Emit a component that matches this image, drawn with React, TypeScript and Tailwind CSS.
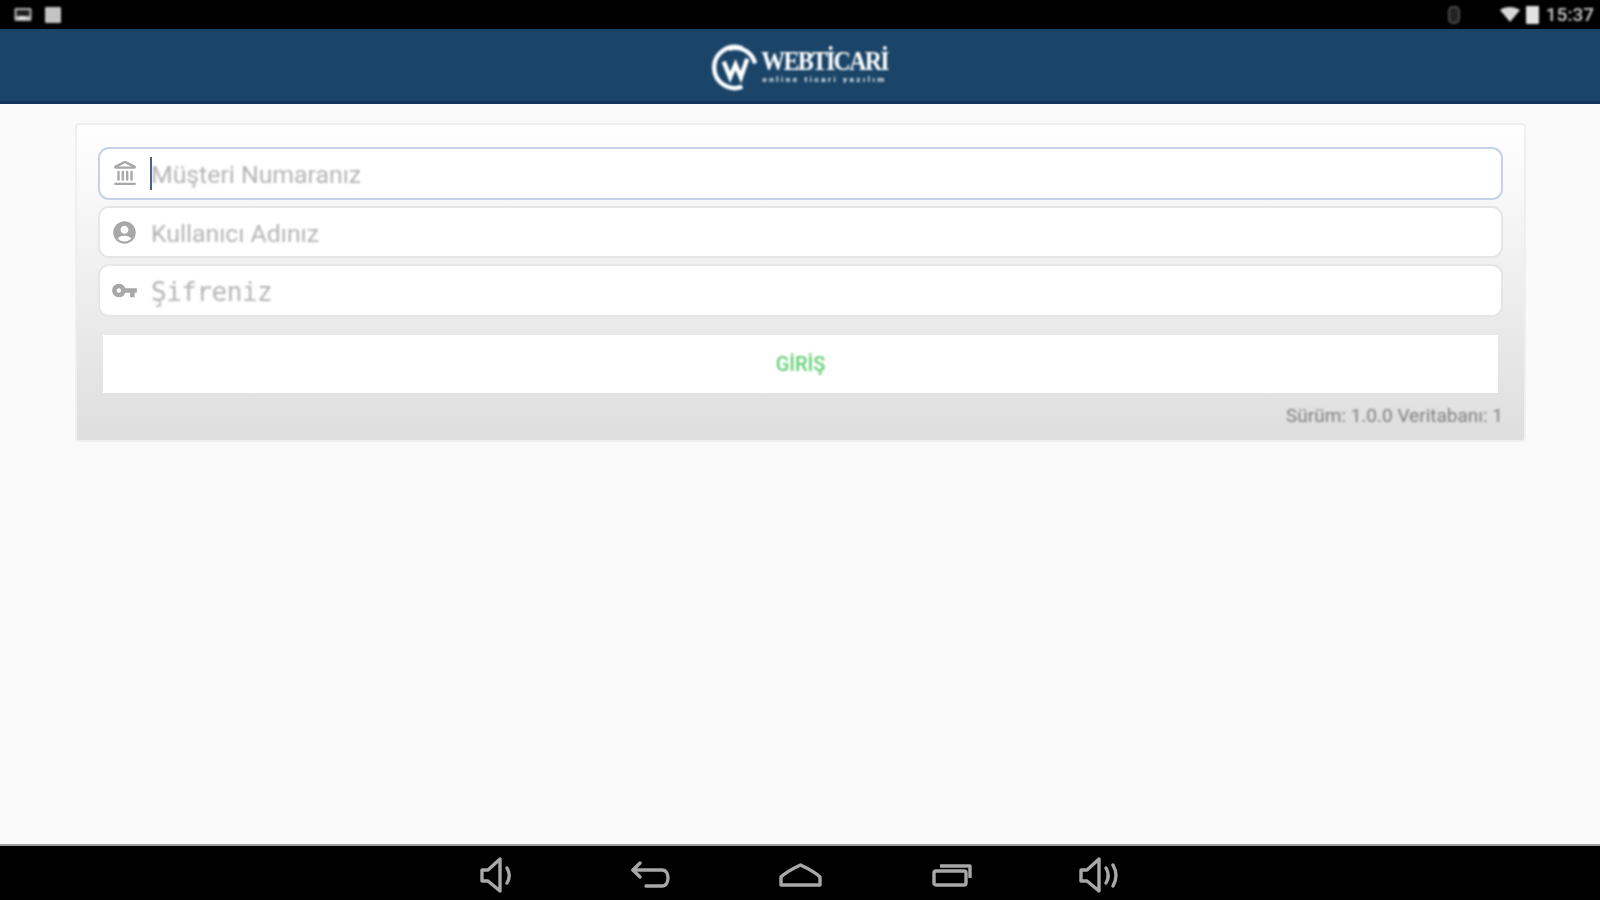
import { MdAccountCircle, MdVpnKey } from 'react-icons/md';
import { Landmark } from 'lucide-react';

const sans = 'font-["Roboto",sans-serif]';

function Field({ icon, label, mono, focused }: { icon: React.ReactNode; label: string; mono?: boolean; focused?: boolean }) {
    return (
        <div
            className={`flex flex-1 items-center rounded-[11px] border-2 bg-white pl-[11px] ${
                focused ? 'border-[#c5d3ea]' : 'border-[#e6e6e6]'
            }`}
        >
            <div className="flex w-[27px] items-center justify-center text-[#a8a8a8] blur-[0.5px]">{icon}</div>
            <div className="relative ml-[12px] flex h-full items-center">
                {focused && <div className="absolute left-0 top-[8px] h-[33px] w-[2px] bg-[#46638f]" />}
                <span
                    className={`mt-[3px] text-[#b4b4b4] blur-[0.9px] ${
                        mono ? 'pl-[1px] font-["DejaVu_Sans_Mono",monospace] text-[26px] tracking-[-0.5px]' : `${sans} pl-[1px] text-[24.8px]`
                    }`}
                >
                    {label}
                </span>
            </div>
        </div>
    );
}

function VolumeIcon({ loud }: { loud?: boolean }) {
    return (
        <svg width={loud ? 41 : 34} height="36" viewBox={loud ? '0 0 41 36' : '0 0 34 36'} fill="none" stroke="#a8a8a8" strokeWidth="3.4" strokeLinejoin="round" strokeLinecap="round">
            <path d="M2 13h6L20 2v32L8 24H2z" />
            <path d="M27 11c3 5 3 10 0 15" />
            {loud && <path d="M34 8c4 7 4 14 0 21" />}
        </svg>
    );
}

export default function App() {
    return (
        <div className="flex h-[900px] w-[1600px] flex-col overflow-hidden bg-[#fafafa]">
            {/* Status bar */}
            <div className="flex h-[29px] shrink-0 items-center justify-between bg-black pl-[14px] pr-[6px]">
                <div className="flex items-center gap-[13px] blur-[0.8px]">
                    <svg width="18" height="15" viewBox="0 0 18 15">
                        <rect x="0.5" y="1" width="17" height="13" rx="1.5" fill="#b5b5b5" />
                        <rect x="2.5" y="3" width="13" height="6" fill="#222" />
                        <path d="M3 12l4-3 4 1 4 2z" fill="#eee" />
                    </svg>
                    <div className="h-[16px] w-[16px] rounded-[1px] bg-[#c4c4c4]" />
                </div>
                <div className="flex items-center blur-[0.8px]">
                    <div className="mr-[40px] h-[18px] w-[12px] rounded-[5px] border-2 border-[#4a4a4a] bg-[#222]" />
                    <svg width="20" height="15" viewBox="0 0 20 15" className="mr-[6px]">
                        <path d="M0 3c5-4 14-4 20 0l-10 12z" fill="#d8d8d8" />
                    </svg>
                    <div className="mr-[7px] h-[18px] w-[13px] rounded-[1px] bg-[#e2e2e2]" />
                    <span className={`${sans} text-[19px] font-medium leading-none text-[#c9c9c9]`}>15:37</span>
                </div>
            </div>

            {/* Header */}
            <div className="flex h-[75px] shrink-0 items-center justify-center border-b-[3px] border-[#0e3558] bg-[#1a4468]">
                <div className="mt-[4px] flex items-center gap-[2px] blur-[0.8px]">
                    <svg width="47" height="47" viewBox="0 0 48 48" fill="none" stroke="#fff">
                        <path d="M31 4.5A21 21 0 1 0 31 43.5" strokeWidth="4.5" />
                        <path d="M17 5A21 21 0 0 1 44 20" strokeWidth="4.5" />
                        <path d="M12 18l6.5 16 5.5-13 5.5 13 6.5-19" strokeWidth="4.5" />
                    </svg>
                    <div className="flex flex-col items-center">
                        <span className='inline-block origin-bottom scale-y-[1.15] font-["Liberation_Serif",serif] text-[24px] font-bold leading-[25px] tracking-[-1.8px] text-white'>WEBTİCARİ</span>
                        <span className={`${sans} text-[8px] font-bold leading-[8px] tracking-[2.6px] text-white`}>online ticari yazılım</span>
                    </div>
                </div>
            </div>

            {/* Login card */}
            <div className="pl-[75px] pt-[19px]">
                <div className="flex h-[319px] w-[1451px] flex-col rounded-[4px] border-2 border-[#efefef] bg-gradient-to-b from-white to-[#dedede] px-[21px] pt-[22px]">
                    <div className="flex h-[170px] flex-col gap-[6px]">
                        <Field focused icon={<Landmark size={26} strokeWidth={2.2} />} label="Müşteri Numaranız" />
                        <Field icon={<MdAccountCircle size={29} />} label="Kullanıcı Adınız" />
                        <Field mono icon={<MdVpnKey size={29} />} label="Şifreniz" />
                    </div>
                    <div className="mx-[5px] mt-[18px] flex h-[58px] items-center justify-center bg-white">
                        <span className={`${sans} text-[20px] font-medium text-[#63cf74] blur-[0.8px]`}>GİRİŞ</span>
                    </div>
                    <div className={`${sans} mt-[13px] text-right text-[19px] leading-[20px] text-[#7f7f7f] blur-[0.8px]`}>Sürüm: 1.0.0 Veritabanı: 1</div>
                </div>
            </div>

            {/* Nav bar */}
            <div className="mt-auto flex h-[56px] shrink-0 items-center justify-center border-t-2 border-[#9e9e9e] bg-black pt-[3px]">
                <div className="flex items-center blur-[0.6px]">
                    <div className="mr-[117px]"><VolumeIcon /></div>
                    <svg className="mr-[108px]" width="40" height="28" viewBox="0 0 40 28" fill="none" stroke="#a8a8a8" strokeWidth="3.4" strokeLinecap="round" strokeLinejoin="round">
                        <path d="M9 2L2 9l7 7" />
                        <path d="M2 9h29c8 0 8 16 0 16H15" />
                    </svg>
                    <svg className="mr-[110px]" width="43" height="24" viewBox="0 0 43 24" fill="none" stroke="#a8a8a8" strokeWidth="3.4" strokeLinejoin="round">
                        <path d="M2 22V14C7 9 13 6 21.5 2 30 6 36 9 41 14v8z" />
                    </svg>
                    <svg className="mr-[107px]" width="40" height="24" viewBox="0 0 40 24" fill="none" stroke="#a8a8a8" strokeWidth="3.4" strokeLinejoin="round">
                        <rect x="2" y="8" width="32" height="14" rx="2" />
                        <path d="M8 3h30v12" />
                    </svg>
                    <VolumeIcon loud />
                </div>
            </div>
        </div>
    );
}
